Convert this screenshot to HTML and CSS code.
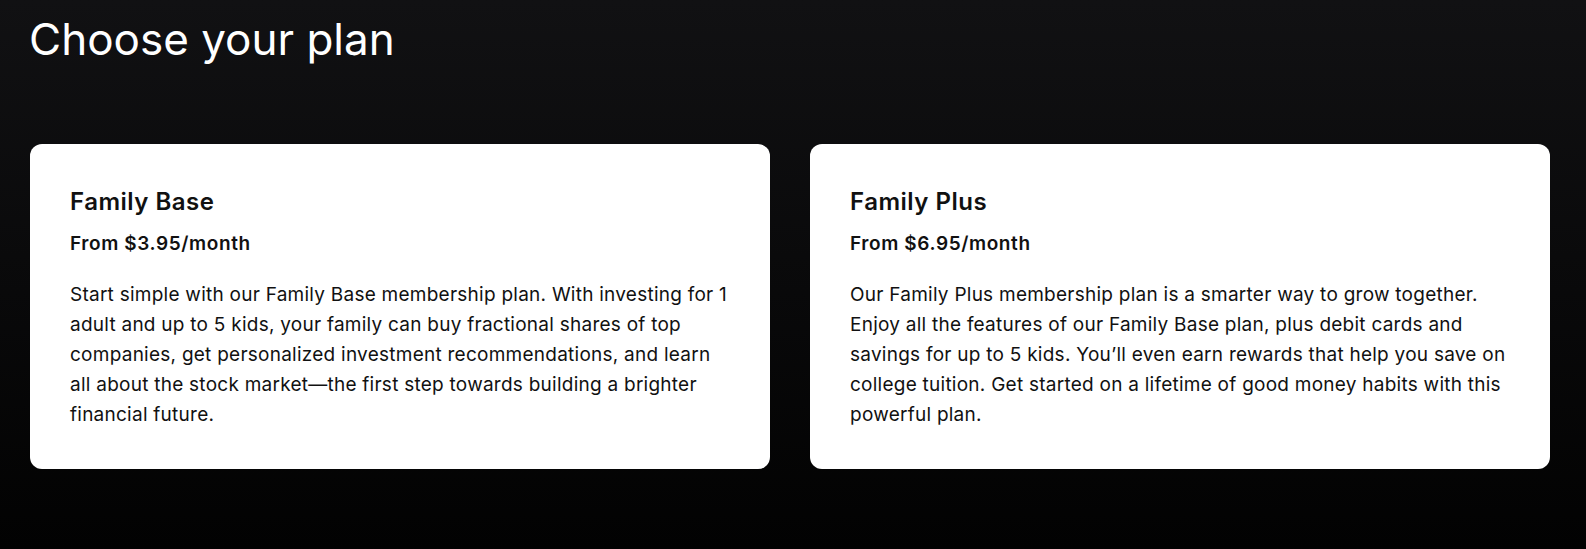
FILE: index.html
```html
<!DOCTYPE html>
<html lang="en">
<head>
    <meta charset="UTF-8">
    <meta name="viewport" content="width=device-width, initial-scale=1.0">
    <title>Choose your plan</title>
    <link rel="stylesheet" href="styles.css">
</head>
<body>
    <div class="page">
        <h1>Choose your plan</h1>
        <div class="plans">
            <div class="plan">
                <h2>Family Base</h2>
                <div class="price">From $3.95/month</div>
                <p>Start simple with our Family Base membership plan. With investing for 1 adult and up to 5 kids, your family can buy fractional shares of top companies, get personalized investment recommendations, and learn all about the stock market—the first step towards building a brighter financial future.</p>
            </div>
            <div class="plan">
                <h2>Family Plus</h2>
                <div class="price">From $6.95/month</div>
                <p>Our Family Plus membership plan is a smarter way to grow together. Enjoy all the features of our Family Base plan, plus debit cards and savings for up to 5 kids. You’ll even earn rewards that help you save on college tuition. Get started on a lifetime of good money habits with this powerful plan.</p>
            </div>
        </div>
    </div>
</body>
</html>
```

FILE: styles.css
```css
body {
    margin: 0;
    font-family: Inter, "Liberation Sans", sans-serif;
    background: linear-gradient(to bottom, #111113 0%, #020202 100%);
    color: #fff;
    height: 549px;
}
.page {
    padding: 0 30px;
}
h1 {
    margin: 0 0 0 -1px;
    padding-top: 12px;
    font-size: 44px;
    font-weight: 400;
    line-height: 54px;
}
.plans {
    display: grid;
    grid-template-columns: 740px 740px;
    gap: 40px;
    margin-top: 78px;
}
.plan {
    background: #fff;
    color: #111;
    border-radius: 12px;
    padding: 42px 40px 38px;
    height: 325px;
    box-sizing: border-box;
}
h2 {
    margin: 0;
    font-size: 24px;
    font-weight: 600;
    letter-spacing: 0.5px;
    line-height: 32px;
}
.price {
    margin-top: 13px;
    font-size: 19px;
    font-weight: 600;
    letter-spacing: 0.6px;
    line-height: 26px;
}
p {
    margin: 23px 0 0;
    font-size: 19px;
    letter-spacing: 0.25px;
    line-height: 30px;
}
```
